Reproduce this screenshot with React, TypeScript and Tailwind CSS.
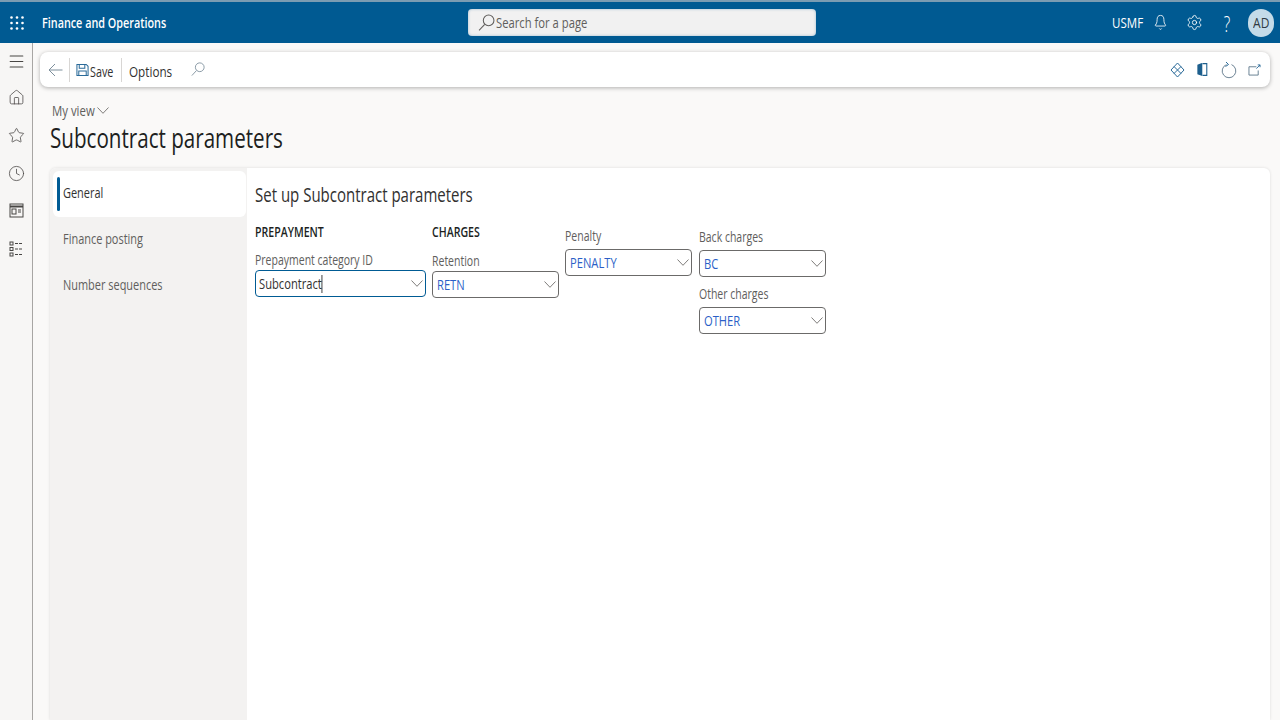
import React from "react";
import { Bell, Settings, Home, Star, Clock, Menu } from "lucide-react";

const font = "font-['Open_Sans','Liberation_Sans',sans-serif]";

function Chevron({ w = 12, h = 7, color = "#7f7d7b" }: { w?: number; h?: number; color?: string }) {
  return (
    <svg width={w} height={h} viewBox="0 0 12 7" preserveAspectRatio="none" fill="none" stroke={color} strokeWidth="1" className="shrink-0">
      <path d="M0.5 0.5L6 6.3l5.5-5.8" />
    </svg>
  );
}

function Magnifier({ size, color }: { size: number; color: string }) {
  return (
    <svg width={size} height={size} viewBox="0 0 16 16" fill="none" stroke={color} strokeWidth="1" className="shrink-0">
      <circle cx="10" cy="6" r="5" />
      <path d="M6.3 9.7L1 15.5" />
    </svg>
  );
}

function Field({ label, value, focused, width = "w-[127px]", labelH = "h-[21px]" }: { label: string; value: string; focused?: boolean; width?: string; labelH?: string }) {
  return (
    <div className={`flex flex-col ${width}`}>
      <div className={`${labelH} flex items-center text-[14px] leading-none text-[#605e5c]`}>
        <span className="inline-block origin-left scale-x-[0.75] whitespace-nowrap">{label}</span>
      </div>
      <div className={`h-[27px] rounded-[4px] bg-white flex items-center justify-between pr-[2px] border ${focused ? "pl-[3px] border-[#005b94] text-[#323130]" : "pl-[4px] border-[#6b6a69] text-[#2b5fc7]"}`}>
        <span className="inline-flex items-center text-[15px] leading-none origin-left scale-x-[0.745] whitespace-nowrap">
          {value}
          {focused && <span className="w-px h-[18px] bg-black" />}
        </span>
        <Chevron />
      </div>
    </div>
  );
}

function Section({ children }: { children: React.ReactNode }) {
  return (
    <div className="h-[20px] flex items-center text-[14px] leading-none font-semibold text-[#201f1e]">
      <span className="inline-block origin-left scale-x-[0.755] whitespace-nowrap">{children}</span>
    </div>
  );
}

function Tab({ label, active }: { label: string; active?: boolean }) {
  return (
    <div className={`relative h-[46px] flex items-center text-[15px] leading-none ${active ? "bg-white text-[#323130] rounded-[6px] ml-[3px] mr-[1px] pl-[10px]" : "text-[#605e5c] pl-[13px]"}`}>
      {active && <span className="absolute left-[4px] top-[6px] w-[3px] h-[34px] bg-[#005b94] rounded-sm" />}
      <span className="inline-block mb-[3px] origin-left scale-x-[0.73] whitespace-nowrap">{label}</span>
    </div>
  );
}

export default function App() {
  return (
    <div className={`w-[1280px] h-[720px] overflow-hidden flex flex-col bg-[#faf9f8] ${font}`}>
      <header className="h-[43px] shrink-0 bg-[#005a92] border-t-2 border-[#7b9cb2] flex items-center text-white">
        <div className="w-[468px] flex items-center">
          <svg width="14" height="14" viewBox="0 0 14 14" className="ml-[10px] fill-white">
            {[1.5, 7, 12.5].flatMap((y) => [1.5, 7, 12.5].map((x) => <circle key={`${x}-${y}`} cx={x} cy={y} r="1.3" />))}
          </svg>
          <span className="ml-[18px] text-[15px] font-semibold inline-block origin-left scale-x-[0.72] whitespace-nowrap">Finance and Operations</span>
        </div>
        <div className="w-[348px] h-[27px] mb-[1px] rounded-[4px] bg-[#f1f1f1] shadow-[inset_0_0_3px_rgba(0,90,146,0.35)] flex items-center pl-[10px] text-[#605e5c]">
          <Magnifier size={17} color="#605e5c" />
          <span className="ml-[1px] text-[15px] inline-block origin-left scale-x-[0.75] whitespace-nowrap">Search for a page</span>
        </div>
        <div className="flex-1 flex items-center justify-end pr-[6px]">
          <span className="text-[15px] inline-block w-[31px] origin-left scale-x-[0.77]">USMF</span>
          <Bell size={17} strokeWidth={1.3} className="ml-[9px] scale-x-[0.8]" />
          <Settings size={17} strokeWidth={1.2} className="ml-[17px]" />
          <span className="ml-[17px] w-[14px] text-[22px] leading-none font-light text-center inline-block scale-x-[0.7]">?</span>
          <div className="ml-[14px] w-[26px] h-[28px] rounded-full bg-[#c4dbe8] text-[#2f3a42] flex items-center justify-center text-[15px]">
            <span className="inline-block scale-x-[0.8]">AD</span>
          </div>
        </div>
      </header>

      <div className="flex-1 flex min-h-0">
        <aside className="w-[33px] shrink-0 border-r border-[#a8a6a4] flex flex-col items-center pt-[9px] text-[#484644] bg-[#f7f6f5]">
          <Menu size={19} strokeWidth={1.3} />
          <Home size={17} strokeWidth={1.1} className="mt-[18px]" />
          <Star size={17} strokeWidth={1.1} className="mt-[21px]" />
          <Clock size={17} strokeWidth={1.1} className="mt-[21px]" />
          <svg width="15" height="15" viewBox="0 0 15 15" fill="none" stroke="#484644" strokeWidth="1" className="mt-[21px]">
            <rect x="1" y="1" width="13" height="13" />
            <path d="M1 3.5h13" strokeWidth="2" />
            <rect x="3" y="6" width="4" height="5" />
            <path d="M9 7h3M9 9h3" />
          </svg>
          <svg width="15" height="16" viewBox="0 0 15 16" fill="none" stroke="#484644" strokeWidth="1" className="mt-[23px]">
            <rect x="1" y="1" width="3" height="3" />
            <rect x="1" y="6.5" width="3" height="3" />
            <rect x="1" y="12" width="3" height="3" />
            <path d="M6 2.5h8M6 8h8M6 13.5h8" strokeDasharray="3 1" />
          </svg>
        </aside>

        <main className="flex-1 min-w-0 flex flex-col pl-[7px] pr-[10px] pt-[9px]">
          <div className="h-[35px] shrink-0 rounded-[8px] bg-white shadow-[0_1px_4px_rgba(0,0,0,0.3)] flex items-center pl-[8px] pr-[9px] text-[#323130]">
            <svg width="15" height="14" viewBox="0 0 15 14" fill="none" stroke="#7d8f9c" strokeWidth="1">
              <path d="M14.5 7H1M7 1L1 7l6 6" />
            </svg>
            <span className="ml-[6px] h-[24px] w-px bg-[#d8d6d4]" />
            <svg width="13" height="14" viewBox="0 0 14 14" fill="none" stroke="#2a6a99" strokeWidth="1.1" className="ml-[6px]">
              <path d="M1 1h10l2 2v10H1z" />
              <path d="M3.5 1v4h6V1" />
              <path d="M3 13V8h8v5" />
            </svg>
            <span className="ml-[1px] mt-[4px] w-[24px] text-[14px] leading-none inline-block origin-left scale-x-[0.77]">Save</span>
            <span className="ml-[7px] h-[24px] w-px bg-[#d8d6d4]" />
            <span className="ml-[7px] mt-[4px] w-[43px] text-[15px] leading-none inline-block origin-left scale-x-[0.78]">Options</span>
            <div className="ml-[19px] -mt-[1px]">
              <Magnifier size={14} color="#7d8f9c" />
            </div>
            <div className="flex-1" />
            <svg width="15" height="16" viewBox="0 0 15 16" fill="none" stroke="#2a6a99" strokeWidth="1">
              <path d="M7.5 1l6.5 7-6.5 7L1 8z" />
              <path d="M4 4.5l7 7M11 4.5l-7 7" />
            </svg>
            <svg width="11" height="15" viewBox="0 0 10 14" className="ml-[12px]" fill="none" stroke="#1d5f8d" strokeWidth="1.6">
              <path d="M4 2L1 3.2v7.6L4 12z" fill="#1d5f8d" />
              <path d="M5 1.5h4v11H5" strokeWidth="1" />
            </svg>
            <svg width="16" height="18" viewBox="0 0 16 18" fill="none" stroke="#6f8596" strokeWidth="1" className="ml-[13px]">
              <path d="M10.5 3.6a6.8 6.8 0 1 1-5 0" />
              <path d="M5 1l2.5 2.5L4.5 5.5" stroke="#2a6a99" />
            </svg>
            <svg width="13" height="12" viewBox="0 0 14 13" fill="none" stroke="#5f7a8d" strokeWidth="1" className="ml-[11px]">
              <path d="M9 3H1v9h10V7" />
              <path d="M9 5l4-4M10.5 1H13v2.5" stroke="#2a6a99" />
            </svg>
          </div>

          <div className="h-[22px] mt-[12px] ml-[12px] flex items-center text-[15px] leading-none text-[#605e5c]">
            <span className="inline-block w-[45px] origin-left scale-x-[0.76] whitespace-nowrap">My view</span>
            <Chevron w={12} h={7} />
          </div>
          <h1 className="h-[28px] mt-[2px] ml-[10px] flex items-center text-[27px] font-normal leading-none text-[#201f1e]">
            <span className="inline-block origin-left scale-x-[0.763] whitespace-nowrap">Subcontract parameters</span>
          </h1>

          <div className="mt-[17px] ml-[10px] flex-1 min-h-0 rounded-t-[6px] bg-white shadow-[0_0_3px_rgba(0,0,0,0.12)] flex">
            <nav className="w-[197px] shrink-0 bg-[#f3f2f1] pt-[3px] rounded-tl-[6px] flex flex-col">
              <Tab label="General" active />
              <Tab label="Finance posting" />
              <Tab label="Number sequences" />
            </nav>
            <section className="flex-1 pl-[8px] pt-[15px]">
              <h2 className="h-[24px] flex items-center text-[20px] font-normal leading-none text-[#323130]">
                <span className="inline-block origin-left scale-x-[0.75] whitespace-nowrap">Set up Subcontract parameters</span>
              </h2>
              <div className="mt-[15px] flex items-start">
                <div className="w-[177px] flex flex-col">
                  <Section>PREPAYMENT</Section>
                  <div className="mt-[7px]">
                    <Field label="Prepayment category ID" value="Subcontract" focused width="w-[171px]" />
                  </div>
                </div>
                <div className="w-[133px] flex flex-col">
                  <Section>CHARGES</Section>
                  <div className="mt-[8px]">
                    <Field label="Retention" value="RETN" />
                  </div>
                </div>
                <div className="w-[134px] pt-[4px]">
                  <Field label="Penalty" value="PENALTY" labelH="h-[23px] pb-[3px]" />
                </div>
                <div className="flex flex-col gap-[7px] pt-[5px]">
                  <Field label="Back charges" value="BC" labelH="h-[23px] pb-[3px]" />
                  <Field label="Other charges" value="OTHER" labelH="h-[23px] pb-[3px]" />
                </div>
              </div>
            </section>
          </div>
        </main>
      </div>
    </div>
  );
}
